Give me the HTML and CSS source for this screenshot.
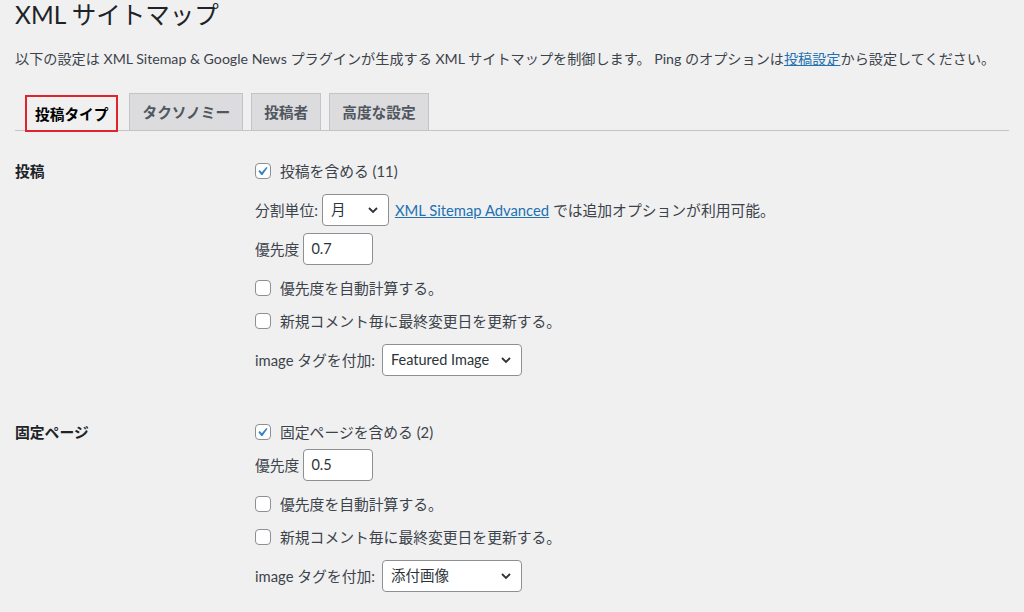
FILE: index.html
```html
<!DOCTYPE html>
<html lang="ja">
<head>
    <meta charset="UTF-8">
    <meta name="viewport" content="width=device-width, initial-scale=1.0">
    <title>XML サイトマップ</title>
    <link rel="stylesheet" href="styles.css">
</head>
<body>
    <div class="wrap">
        <h1 class="page-title">XML サイトマップ</h1>
        <p class="description">以下の設定は XML Sitemap &amp; Google News プラグインが生成する XML サイトマップを制御します。 Ping のオプションは<a href="#">投稿設定</a>から設定してください。</p>

        <nav class="nav-tabs">
            <a href="#" class="nav-tab active">投稿タイプ</a>
            <a href="#" class="nav-tab">タクソノミー</a>
            <a href="#" class="nav-tab">投稿者</a>
            <a href="#" class="nav-tab">高度な設定</a>
        </nav>

        <!-- 投稿 -->
        <div class="section">
            <div class="section-label">投稿</div>
            <div class="section-fields">
                <label class="line">
                    <span class="checkbox checked">
                        <svg viewBox="3 1.5 16 16" width="16" height="16"><path d="M14.83 4.89l1.34.94-5.81 8.38H9.02L5.78 9.67l1.34-1.25 2.57 2.4z"/></svg>
                    </span>
                    投稿を含める (11)
                </label>
                <div class="line">
                    <span class="field-label">分割単位:</span>
                    <span class="select select-sm">
                        <span>月</span>
                        <svg class="chevron" viewBox="0 0 16 16" width="16" height="16"><path d="M4 6l4 4 4-4"/></svg>
                    </span>
                    <a href="#" class="note-link">XML Sitemap Advanced</a>&nbsp;では追加オプションが利用可能。
                </div>
                <div class="line">
                    <span class="field-label">優先度</span>
                    <span class="text-input">0.7</span>
                </div>
                <label class="line">
                    <span class="checkbox"></span>
                    優先度を自動計算する。
                </label>
                <label class="line close">
                    <span class="checkbox"></span>
                    新規コメント毎に最終変更日を更新する。
                </label>
                <div class="line">
                    <span class="field-label wide">image タグを付加:</span>
                    <span class="select">
                        <span>Featured Image</span>
                        <svg class="chevron" viewBox="0 0 16 16" width="16" height="16"><path d="M4 6l4 4 4-4"/></svg>
                    </span>
                </div>
            </div>
        </div>

        <!-- 固定ページ -->
        <div class="section">
            <div class="section-label">固定ページ</div>
            <div class="section-fields">
                <label class="line">
                    <span class="checkbox checked">
                        <svg viewBox="3 1.5 16 16" width="16" height="16"><path d="M14.83 4.89l1.34.94-5.81 8.38H9.02L5.78 9.67l1.34-1.25 2.57 2.4z"/></svg>
                    </span>
                    固定ページを含める (2)
                </label>
                <div class="line close">
                    <span class="field-label">優先度</span>
                    <span class="text-input">0.5</span>
                </div>
                <label class="line">
                    <span class="checkbox"></span>
                    優先度を自動計算する。
                </label>
                <label class="line close">
                    <span class="checkbox"></span>
                    新規コメント毎に最終変更日を更新する。
                </label>
                <div class="line">
                    <span class="field-label wide">image タグを付加:</span>
                    <span class="select">
                        <span>添付画像</span>
                        <svg class="chevron" viewBox="0 0 16 16" width="16" height="16"><path d="M4 6l4 4 4-4"/></svg>
                    </span>
                </div>
            </div>
        </div>
    </div>
</body>
</html>
```

FILE: styles.css
```css
* {
    margin: 0;
    padding: 0;
    box-sizing: border-box;
}

body {
    background-color: #f0f0f1;
    color: #3c434a;
    font-family: Lato, "Noto Sans CJK JP", sans-serif;
    font-size: 14px;
    line-height: 20px;
    overflow: hidden;
}

.wrap {
    padding: 0 15px;
}

.page-title {
    height: 30px;
    font-size: 24.5px;
    font-weight: 400;
    line-height: 30px;
    color: #1d2327;
    white-space: nowrap;
}

.description {
    margin-top: 19px;
    font-size: 14.15px;
    white-space: nowrap;
}

.description a,
.note-link {
    color: #2271b1;
    text-decoration: underline;
}

/* Tabs */
.nav-tabs {
    margin-top: 24px;
    display: flex;
    align-items: flex-end;
    border-bottom: 1px solid #c3c4c7;
    height: 38px;
}

.nav-tab {
    display: flex;
    align-items: center;
    height: 38px;
    margin-bottom: -1px;
    padding: 0 12px;
    margin-left: 8px;
    background-color: #dcdcde;
    border: 1px solid #c3c4c7;
    color: #50575e;
    font-size: 14.7px;
    font-weight: 700;
    text-decoration: none;
}

.nav-tab.active {
    margin-left: 10px;
    margin-right: 3px;
    margin-bottom: -2px;
    height: 37px;
    padding: 0 8px;
    background-color: #f0f0f1;
    border: 2px solid #e0242b;
    color: #000;
}

/* Form sections */
.section {
    display: flex;
    padding-top: 24px;
}

.section + .section {
    padding-top: 40px;
}

.section-label {
    width: 240px;
    flex-shrink: 0;
    line-height: 32px;
    font-size: 14.8px;
    font-weight: 700;
    color: #1d2327;
}

.section-fields {
    display: flex;
    flex-direction: column;
}

.line {
    display: flex;
    align-items: center;
    height: 32px;
    font-size: 14.8px;
    white-space: nowrap;
    color: #3c434a;
}

.line + .line {
    margin-top: 7px;
}

.line + .line.close {
    margin-top: 1px;
}

.checkbox {
    width: 16px;
    height: 16px;
    margin-right: 9px;
    border: 1px solid #8c8f94;
    border-radius: 4px;
    background-color: #fff;
    display: flex;
    align-items: center;
    justify-content: center;
    flex-shrink: 0;
}

.checkbox svg {
    fill: #3582c4;
}

.field-label {
    margin-right: 4px;
}

.field-label.wide {
    margin-right: 7px;
}

.select {
    display: flex;
    align-items: center;
    justify-content: space-between;
    width: 140px;
    height: 32px;
    padding: 0 7px 0 8px;
    background-color: #fff;
    border: 1px solid #8c8f94;
    border-radius: 4px;
    color: #2c3338;
    font-size: 14.5px;
    margin-right: 6px;
}

.select-sm {
    width: 67px;
}

.chevron {
    fill: none;
    stroke: #2c3338;
    stroke-width: 1.8;
}

.text-input {
    display: flex;
    align-items: center;
    width: 70px;
    height: 32px;
    padding: 0 7px;
    background-color: #fff;
    border: 1px solid #8c8f94;
    border-radius: 4px;
    color: #2c3338;
    font-size: 14.5px;
}
```
